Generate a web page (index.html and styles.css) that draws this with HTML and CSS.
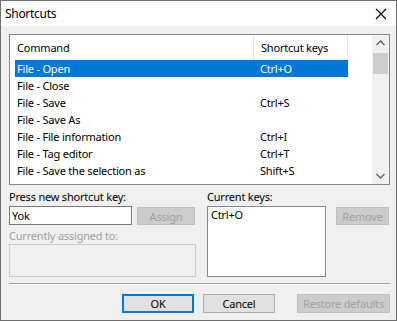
FILE: index.html
```html
<!DOCTYPE html>
<html lang="en">
<head>
    <meta charset="UTF-8">
    <title>Shortcuts</title>
    <link rel="stylesheet" href="styles.css">
</head>
<body>
    <div class="window">
        <div class="titlebar">
            <span class="title">Shortcuts</span>
            <svg class="close" width="12" height="12" viewBox="0 0 12 12">
                <path d="M1 1 L11 11 M11 1 L1 11" stroke="#000" stroke-width="1.1" fill="none"/>
            </svg>
        </div>
        <div class="client">
            <div class="listview">
                <div class="lv-main">
                    <div class="lv-header">
                        <div class="hcol col-cmd">Command</div>
                        <div class="hcol col-key">Shortcut keys</div>
                    </div>
                    <div class="lv-rows">
                        <div class="row selected"><span class="cell-cmd">File - Open</span><span class="cell-key">Ctrl+O</span></div>
                        <div class="row"><span class="cell-cmd">File - Close</span><span class="cell-key"></span></div>
                        <div class="row"><span class="cell-cmd">File - Save</span><span class="cell-key">Ctrl+S</span></div>
                        <div class="row"><span class="cell-cmd">File - Save As</span><span class="cell-key"></span></div>
                        <div class="row"><span class="cell-cmd">File - File information</span><span class="cell-key">Ctrl+I</span></div>
                        <div class="row"><span class="cell-cmd">File - Tag editor</span><span class="cell-key">Ctrl+T</span></div>
                        <div class="row"><span class="cell-cmd">File - Save the selection as</span><span class="cell-key">Shift+S</span></div>
                    </div>
                </div>
                <div class="scrollbar">
                    <svg class="arrow" width="17" height="17" viewBox="0 0 17 17">
                        <path d="M4.5 10 L8.5 6 L12.5 10" stroke="#606060" stroke-width="1.3" fill="none"/>
                    </svg>
                    <div class="thumb"></div>
                    <div class="track"></div>
                    <svg class="arrow" width="17" height="17" viewBox="0 0 17 17">
                        <path d="M4.5 7 L8.5 11 L12.5 7" stroke="#606060" stroke-width="1.3" fill="none"/>
                    </svg>
                </div>
            </div>

            <div class="lower">
                <div class="pane-left">
                    <div class="label">Press new shortcut key:</div>
                    <div class="key-row">
                        <div class="textbox">Yok</div>
                        <div class="btn disabled btn-assign">Assign</div>
                    </div>
                    <div class="label disabled-text label-assigned">Currently assigned to:</div>
                    <div class="assigned"></div>
                </div>
                <div class="pane-right">
                    <div class="label">Current keys:</div>
                    <div class="key-row">
                        <div class="keylist">Ctrl+O</div>
                        <div class="btn disabled btn-remove">Remove</div>
                    </div>
                </div>
            </div>

            <div class="separator"></div>

            <div class="buttons">
                <div class="btn btn-default btn-ok">OK</div>
                <div class="btn btn-cancel">Cancel</div>
                <div class="btn disabled btn-restore">Restore defaults</div>
            </div>
        </div>
    </div>
</body>
</html>
```

FILE: styles.css
```css
* {
    box-sizing: border-box;
    margin: 0;
    padding: 0;
}

body {
    font-family: 'Noto Sans', 'Open Sans', sans-serif;
    font-size: 11px;
    letter-spacing: -0.2px;
    color: #000;
    background-color: #fff;
    white-space: nowrap;
}

.window {
    width: 397px;
    height: 321px;
    border: 1px solid #6f6f6f;
    display: flex;
    flex-direction: column;
}

.titlebar {
    height: 25px;
    background-color: #fff;
    display: flex;
    align-items: center;
    justify-content: space-between;
    padding: 0 9px 0 4px;
}

.title {
    font-size: 12px;
    letter-spacing: -0.3px;
}

.client {
    flex: 1;
    background-color: #f0f0f0;
    padding: 8px 6px 0 8px;
    display: flex;
    flex-direction: column;
}

/* list view */
.listview {
    height: 151px;
    border: 1px solid #828790;
    background-color: #fff;
    display: flex;
}

.lv-main {
    flex: 1;
}

.lv-header {
    height: 25px;
    display: flex;
}

.hcol {
    padding-left: 7px;
    line-height: 25px;
    border-right: 1px solid #e5e5e5;
}

.col-cmd {
    width: 244px;
}

.col-key {
    width: 94px;
}

.lv-rows {
    padding-left: 5px;
}

.row {
    height: 17px;
    line-height: 17px;
    width: 333px;
    display: flex;
}

.row.selected {
    background-color: #0078d7;
    color: #fff;
}

.cell-cmd {
    width: 244px;
    padding-left: 2px;
}

.cell-key {
    padding-left: 1px;
}

.scrollbar {
    width: 17px;
    background-color: #f0f0f0;
    display: flex;
    flex-direction: column;
}

.arrow {
    display: block;
}

.thumb {
    height: 21px;
    margin: 1px 1px 0 1px;
    background-color: #cdcdcd;
}

.track {
    flex: 1;
}

/* lower part */
.lower {
    display: flex;
    margin-top: 4px;
}

.pane-left {
    width: 187px;
}

.pane-right {
    margin-left: 11px;
    flex: 1;
}

.label {
    height: 16px;
    line-height: 16px;
    margin-bottom: 1px;
}

.disabled-text {
    color: #a0a0a0;
}

.key-row {
    display: flex;
    align-items: flex-start;
}

.textbox {
    width: 123px;
    height: 19px;
    border: 1px solid #7a7a7a;
    background-color: #fff;
    padding-left: 2px;
    line-height: 17px;
}

.btn {
    height: 19px;
    border: 1px solid #adadad;
    background-color: #e1e1e1;
    display: flex;
    align-items: center;
    justify-content: center;
}

.btn.disabled {
    background-color: #cccccc;
    border-color: #bfbfbf;
    color: #a0a0a0;
}

.btn-assign {
    width: 58px;
    height: 18px;
    margin-left: 5px;
    margin-top: 1px;
}

.label-assigned {
    margin-top: 3px;
    margin-bottom: 0;
}

.assigned {
    height: 33px;
    border: 1px solid #cccccc;
    background-color: #f0f0f0;
}

.keylist {
    width: 119px;
    height: 71px;
    border: 1px solid #828790;
    background-color: #fff;
    padding-left: 3px;
    line-height: 16px;
}

.btn-remove {
    width: 53px;
    height: 18px;
    margin-left: 10px;
    margin-top: 1px;
}

.separator {
    margin-top: 6px;
    border-top: 1px solid #a0a0a0;
    border-bottom: 1px solid #fff;
}

.buttons {
    display: flex;
    justify-content: flex-end;
    margin-top: 9px;
}

.btn-default {
    border: 2px solid #0078d7;
}

.btn-ok {
    width: 72px;
    height: 19px;
}

.btn-cancel {
    width: 72px;
    height: 19px;
    margin-left: 9px;
}

.btn-restore {
    width: 93px;
    height: 19px;
    margin-left: 22px;
}
```
